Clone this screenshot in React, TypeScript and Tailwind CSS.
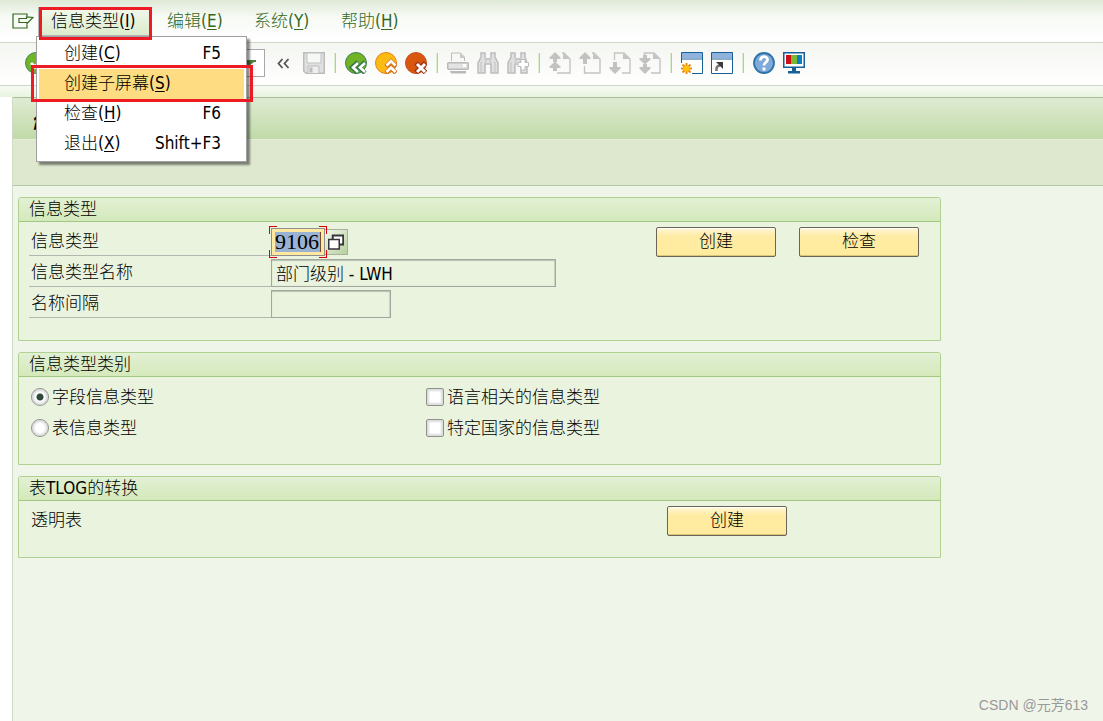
import { useState, type ReactNode } from 'react';
import { clsx } from 'clsx';

const menus = [
  { label: '编辑', hotkey: 'E' },
  { label: '系统', hotkey: 'Y' },
  { label: '帮助', hotkey: 'H' },
];

const menuItems = [
  { label: '创建', hotkey: 'C', shortcut: 'F5' },
  { label: '创建子屏幕', hotkey: 'S', shortcut: '' },
  { label: '检查', hotkey: 'H', shortcut: 'F6' },
  { label: '退出', hotkey: 'X', shortcut: 'Shift+F3' },
];

function Hotkey({ label, hotkey }: { label: string; hotkey: string }) {
  return (
    <span>
      {label}(<u className="underline-offset-2">{hotkey}</u>)
    </span>
  );
}

function ToolButton({ title, children }: { title: string; children: ReactNode }) {
  return (
    <button type="button" title={title} aria-label={title} className="size-[22px] shrink-0">
      <svg viewBox="0 0 22 22" className="size-[22px]" fill="none">
        {children}
      </svg>
    </button>
  );
}

function Separator() {
  return (
    <span className="flex h-5 w-1 shrink-0 justify-center">
      <span className="w-px bg-[#dcefcf]" />
      <span className="w-px bg-[#a9d48a]" />
    </span>
  );
}

function PageShape() {
  return (
    <>
      <path d="M13 1h2l6 6v14H8" stroke="#c4c4c4" strokeWidth="1.4" />
      <path d="M14 1v6h7z" fill="#c4c4c4" />
    </>
  );
}

function Toolbar() {
  return (
    <div className="flex h-[43px] items-center gap-2 overflow-hidden border-b border-[#cdd8c5] bg-linear-to-b from-[#f4f6f1] to-white pb-0.5 pl-[25px]">
      <ToolButton title="回车">
        <circle cx="11" cy="11" r="10.5" fill="#6fb52c" stroke="#3f8a4a" />
        <path d="M6 11l4 4 7-8" stroke="#fff" strokeWidth="3" />
      </ToolButton>
      <div className="flex h-7 w-[210px] shrink-0 items-center border border-[#a8a8a8] bg-white pr-2">
        <input aria-label="命令" className="h-full min-w-0 flex-1 bg-transparent px-1 outline-none" />
        <button type="button" aria-label="命令历史">
          <svg viewBox="0 0 14 6" className="h-1.5 w-3.5">
            <path d="M0 0h14v2h-2l-5 4-5-4H0z" fill="#4f7f3d" />
          </svg>
        </button>
      </div>
      <ToolButton title="折叠">
        <path d="M9.5 7l-4 4.5 4 4.5M15.500 7l-4 4.500 4 4.500" stroke="#555" strokeWidth="1.800" />
      </ToolButton>
      <ToolButton title="保存">
        <path d="M.75.75h20.500v20.500H3L.75 19z" fill="#e0e0e0" stroke="#bcbcbc" strokeWidth="1.500" />
        <path d="M4 1h14v10H4z" fill="#f6f8f4" stroke="#c2c2c2" />
        <path d="M5 14h11v7.500H5z" fill="#eee" stroke="#bcbcbc" />
        <path d="M6.500 15.500h3v5h-3z" fill="#bcbcbc" />
      </ToolButton>
      <Separator />
      <ToolButton title="返回">
        <circle cx="11" cy="11" r="10.500" fill="#72b326" stroke="#3b8050" />
        <path d="M13 10l-6 5.500 6 5.500M20 10l-6 5.500 6 5.500" stroke="#3b7a4a" strokeWidth="4.500" />
        <path d="M13 11l-5 4.500 5 4.500M20 11l-5 4.500 5 4.500" stroke="#fff" strokeWidth="2.500" />
      </ToolButton>
      <ToolButton title="退出">
        <circle cx="11" cy="11" r="10.500" fill="#fcbb12" stroke="#e68217" />
        <path d="M11 14.500l5-5 5 5M11 21l5-5 5 5" stroke="#d9741a" strokeWidth="4.500" />
        <path d="M11.500 13.500L16 9l4.500 4.500M11.500 20l4.500-4.500 4.500 4.500" stroke="#fff" strokeWidth="2.600" />
      </ToolButton>
      <ToolButton title="取消">
        <circle cx="11" cy="11" r="10.500" fill="#d9560f" stroke="#c4501c" />
        <path d="M11 11l9.500 9.500M20.500 11L11 20.500" stroke="#9c3416" strokeWidth="5" />
        <path d="M12 12l8 8M20 12l-8 8" stroke="#fff" strokeWidth="3" />
      </ToolButton>
      <Separator />
      <ToolButton title="打印">
        <path d="M4.500 9V1h9l4 4v4" stroke="#bcbcbc" />
        <path d="M13 1v5h5z" fill="#c6c6c6" />
        <rect x=".75" y="10.750" width="20.500" height="6.500" rx="1" fill="#e3e3e3" stroke="#b9b9b9" strokeWidth="1.500" />
        <path d="M16 12h3v3h-3z" fill="#fff" />
        <path d="M3 19h16v2.500H4z" fill="#b9b9b9" />
      </ToolButton>
      <ToolButton title="查找">
        <path d="M4 1h4v4l1 2h4l1-2V1h4v4l3 6v10h-7v-9H8v9H1V11l3-6z" fill="#e0e0e0" stroke="#bcbcbc" strokeWidth="1.500" />
        <path d="M8 4l1 8M14 4l-1 8M4 10v10M18 10v10" stroke="#cbcbcb" strokeWidth="1.500" />
      </ToolButton>
      <ToolButton title="继续查找">
        <path d="M4 1h4v4l1 2h4l1-2V1h4v4l2 6v10h-6v-9H8v9H1V11l3-6z" fill="#e0e0e0" stroke="#bcbcbc" strokeWidth="1.500" />
        <path d="M8 4l1 8M14 4l-1 8M4 10v10" stroke="#cbcbcb" strokeWidth="1.500" />
        <path d="M14 7.500h4v3h3.500v4H18V18h-4v-3.500h-3v-4h3z" fill="#fff" stroke="#bcbcbc" />
      </ToolButton>
      <Separator />
      <ToolButton title="首页">
        <PageShape />
        <path d="M6 0l5.500 5.500V7H8v3H4V7H.5V5.500zM6 9.500l5.500 5V16H8v3H4v-3H.5v-1.500z" fill="#c2c2c2" />
      </ToolButton>
      <ToolButton title="上一页">
        <path d="M5.500 14v7H21V7l-6-6h-2" stroke="#c4c4c4" strokeWidth="1.400" />
        <path d="M14 1v6h7z" fill="#c4c4c4" />
        <path d="M6 0l5.500 5.500V7H8v5H4V7H.5V5.500z" fill="#c2c2c2" />
      </ToolButton>
      <ToolButton title="下一页">
        <path d="M5.500 8V1H15l6 6v14h-8" stroke="#c4c4c4" strokeWidth="1.400" />
        <path d="M14 1v6h7z" fill="#c4c4c4" />
        <path d="M6 22l5.500-5.500V15H8v-5H4v5H.5v1.500z" fill="#c2c2c2" />
      </ToolButton>
      <ToolButton title="末页">
        <path d="M5.500 3V1H15l6 6v14h-9" stroke="#c4c4c4" strokeWidth="1.400" />
        <path d="M14 1v6h7z" fill="#c4c4c4" />
        <path d="M6 12.500L.5 7.500V6H4V3h4v3h3.500v1.500zM6 22L.5 16.500V15H4v-3h4v3h3.500v1.500z" fill="#c2c2c2" />
      </ToolButton>
      <Separator />
      <ToolButton title="新建会话">
        <path d="M.5.500h21v21H.5z" fill="#fff" stroke="#175f96" />
        <path d="M1 1h20v5H1z" fill="#8fb3dc" />
        <path d="M1 7h20" stroke="#175f96" />
        <path d="M0 11h11v11H0z" fill="#fff" />
        <path d="M5.500 11v11M0 16.500h11M1.500 12.500l8 8M9.500 12.500l-8 8" stroke="#ee8b0d" strokeWidth="2" />
        <circle cx="5.500" cy="16.500" r="3" fill="#ffc20e" />
      </ToolButton>
      <ToolButton title="生成快捷方式">
        <path d="M.5.500h21v21H.5z" fill="#fff" stroke="#175f96" />
        <path d="M1 1h20v5H1z" fill="#8fb3dc" />
        <path d="M1 7h20" stroke="#175f96" />
        <path d="M5.500 19v-2c0-2 1-3.500 4-3.500" stroke="#777" strokeWidth="2.500" />
        <path d="M5 10h7v7l-2.500-2.500z" fill="#3c3c3c" />
      </ToolButton>
      <Separator />
      <ToolButton title="帮助">
        <circle cx="11" cy="11" r="10" fill="#7ea9d8" stroke="#2b73a8" strokeWidth="1.800" />
        <path d="M7.500 8.500c0-5 7-5 7-1 0 3-3.500 2.500-3.500 6" stroke="#fff" strokeWidth="2.800" />
        <path d="M9.500 15.500h3v3h-3z" fill="#fff" />
      </ToolButton>
      <ToolButton title="定制本地布局">
        <path d="M.75.750h20.500v14.500H.75z" fill="#fff" stroke="#175f96" strokeWidth="1.500" />
        <path d="M3 3h5v9H3z" fill="#cc1016" />
        <path d="M8 3h6v9H8z" fill="#7cb82f" />
        <path d="M14 3h5v9h-5z" fill="#0a7fc4" />
        <path d="M9 16h4v3h4v2.500H5V19h4z" fill="#175f96" />
      </ToolButton>
    </div>
  );
}

function MenuBar() {
  return (
    <nav className="flex h-[43px] items-center border-b border-[#cdd8c5] bg-linear-to-b from-[#dfe9d6] via-[#f7faf5] via-40% to-white pl-3 text-[#33691e]">
      <button type="button" aria-label="系统菜单" className="w-[26px] shrink-0">
        <svg viewBox="0 0 22 16" className="h-4 w-[22px]" fill="none" stroke="#33691e" strokeWidth="1.200">
          <path d="M15 3.500V1H1v14h14v-3.500" />
          <path d="M7 5.500h7.500V4L21 4.500l-6 6V9.500H7z" />
        </svg>
      </button>
      <div className="flex items-center gap-[3px]">
        <div className="relative">
          <button
            type="button"
            aria-expanded="true"
            className="h-[29px] w-[114px] border border-[#b5b5b5] bg-linear-to-b from-[#f2f8ec] to-[#dcebcc] pl-3 text-left text-black"
          >
            <Hotkey label="信息类型" hotkey="I" />
          </button>
          <div className="pointer-events-none absolute top-0 left-px z-30 h-[33px] w-[113px] border-3 border-[#ed1c24]" />
          <ul className="absolute top-[29px] -left-0.5 z-20 w-[211px] border border-[#a0a0a0] bg-white p-0.5 text-black shadow-[3px_3px_2px_rgba(0,0,0,0.45)]">
            {menuItems.map((item) => (
              <li key={item.label} className="relative">
                <button
                  type="button"
                  className={clsx(
                    'flex h-[30px] w-full items-center justify-between pr-[23px] pb-0.5 pl-[25px]',
                    item.hotkey === 'S' && 'bg-[#fddc82]',
                  )}
                >
                  <Hotkey label={item.label} hotkey={item.hotkey} />
                  <span>{item.shortcut}</span>
                </button>
                {item.hotkey === 'S' && (
                  <div className="pointer-events-none absolute -top-1 -right-[9px] -bottom-[3px] -left-2 border-3 border-[#ed1c24]" />
                )}
              </li>
            ))}
          </ul>
        </div>
        {menus.map((menu) => (
          <button key={menu.label} type="button" className="h-[29px] w-[84px] pl-3 text-left">
            <Hotkey {...menu} />
          </button>
        ))}
      </div>
    </nav>
  );
}

function Group({ title, children }: { title: string; children: ReactNode }) {
  return (
    <section className="w-full max-w-[923px] rounded-t-[3px] border border-[#b0d190] bg-[#eaf3de]">
      <h2 className="h-6 rounded-t-[2px] border-b border-[#a2c783] bg-linear-to-b from-[#e2f0d4] to-[#d4e9bb] pl-2.5 leading-[22px]">
        {title}
      </h2>
      <div className="pt-1.5 pr-5 pb-[22px] pl-2.5">{children}</div>
    </section>
  );
}

function PushButton({ children }: { children: ReactNode }) {
  return (
    <button
      type="button"
      className="-my-px h-[30px] w-[120px] shrink-0 rounded-[2px] border border-[#6b6558] bg-linear-to-b from-[#fff6d6] via-[#ffeca4] via-30% to-[#ffeb9c] pb-0.5 shadow-[inset_0_1px_0_#fff,inset_0_-1px_0_#d9c57c]"
    >
      {children}
    </button>
  );
}

function FieldRow({ id, label, children }: { id: string; label: string; children: ReactNode }) {
  return (
    <div className="flex h-7">
      <label htmlFor={id} className="w-[242px] shrink-0 border-b border-[#b3b8ae] pl-0.5 leading-[26px]">
        {label}
      </label>
      {children}
    </div>
  );
}

const readOnlyField =
  'h-7 border border-[#a3a69f] bg-[#eaf3de] px-1 pb-0.5 shadow-[inset_0_1px_1px_#b9c0b0,inset_-1px_0_1px_#cdd3c5] outline-none';

const choiceBox =
  'size-[18px] shrink-0 appearance-none border border-[#8f938c] bg-white shadow-[inset_0_0_2px_2px_#dcdcdc]';

const radioDot = 'rounded-full checked:bg-[radial-gradient(circle,#2f4a38_0_3px,#fff_4px)]';

export default function App() {
  const [category, setCategory] = useState('field');

  return (
    <div className="relative flex min-h-screen flex-col bg-white font-['DejaVu_Sans_Condensed','Noto_Sans_CJK_SC',sans-serif] text-[17px] leading-6 font-light text-black">
      <MenuBar />
      <Toolbar />
      <div className="h-[11px] bg-linear-to-b from-[#f5faf2] to-[#e8f4e0]" />
      <main className="ml-3 flex flex-1 flex-col border-l border-[#cfdcc5] bg-[#f0f5ea]">
        <h1 className="h-[43px] border-t border-b border-t-[#a9bd98] border-b-[#e4eed9] bg-linear-to-b from-[#dfebd2] to-[#c0daa8] pl-[18px] text-[20px] leading-[46px] font-bold italic">
          信息类型
        </h1>
        <div className="h-[46px] border-b border-[#b5c5a6] bg-[#dde8cf]" />
        <div className="flex flex-col gap-[11px] px-[5px] pt-[11px] pb-8">
          <Group title="信息类型">
            <div className="flex items-start gap-[23px]">
              <div className="mr-[77px] flex w-[527px] flex-col gap-[3px]">
                <FieldRow id="infotype" label="信息类型">
                  <div className="relative flex h-7 w-[54px] border border-[#8f8f8f] bg-[#ffe9a0] p-[3px]">
                    <input
                      id="infotype"
                      defaultValue="9106"
                      className="w-full min-w-0 border-r border-[#7a4a2a] bg-[#9bb3d3] font-['Liberation_Serif',serif] text-[22px] font-normal outline-none"
                    />
                    <span className="absolute -top-[3px] -left-[3px] size-2 border-t border-l border-[#e00000]" />
                    <span className="absolute -top-[3px] -right-[3px] size-2 border-t border-r border-[#e00000]" />
                    <span className="absolute -bottom-[3px] -left-[3px] size-2 border-b border-l border-[#e00000]" />
                    <span className="absolute -right-[3px] -bottom-[3px] size-2 border-r border-b border-[#e00000]" />
                  </div>
                  <button
                    type="button"
                    aria-label="搜索帮助"
                    className="mt-px h-[26px] w-[23px] border border-l-0 border-[#a5b39a] bg-linear-to-br from-[#f3f7ee] to-[#b6d09c] pl-[3px]"
                  >
                    <svg viewBox="0 0 16 16" className="size-4" fill="#fff" stroke="#38343c" strokeWidth="1.500">
                      <path d="M4.750 1.500h10.500v9H4.750z" strokeWidth="2" />
                      <path d="M.75 5.500h10.500v9.500H.75z" />
                    </svg>
                  </button>
                </FieldRow>
                <FieldRow id="infotype-name" label="信息类型名称">
                  <input id="infotype-name" readOnly value="部门级别 - LWH" className={clsx(readOnlyField, 'w-[285px]')} />
                </FieldRow>
                <FieldRow id="name-range" label="名称间隔">
                  <input id="name-range" readOnly value="" className={clsx(readOnlyField, 'w-[120px]')} />
                </FieldRow>
              </div>
              <PushButton>创建</PushButton>
              <PushButton>检查</PushButton>
            </div>
          </Group>

          <Group title="信息类型类别">
            <div className="grid grid-cols-[395px_1fr] gap-y-[3px] pl-0.5">
              <label className="flex h-7 items-center gap-[3px]">
                <input
                  type="radio"
                  name="category"
                  checked={category === 'field'}
                  onChange={() => setCategory('field')}
                  className={clsx(choiceBox, radioDot)}
                />
                字段信息类型
              </label>
              <label className="flex h-7 items-center gap-[3px]">
                <input type="checkbox" className={clsx(choiceBox, 'rounded-[2px] checked:bg-[#2f4a38]')} />
                语言相关的信息类型
              </label>
              <label className="flex h-7 items-center gap-[3px]">
                <input
                  type="radio"
                  name="category"
                  checked={category === 'table'}
                  onChange={() => setCategory('table')}
                  className={clsx(choiceBox, radioDot)}
                />
                表信息类型
              </label>
              <label className="flex h-7 items-center gap-[3px]">
                <input type="checkbox" className={clsx(choiceBox, 'rounded-[2px] checked:bg-[#2f4a38]')} />
                特定国家的信息类型
              </label>
            </div>
          </Group>

          <Group title="表TLOG的转换">
            <div className="flex h-7 pl-0.5">
              <span className="w-[636px] leading-[26px]">透明表</span>
              <PushButton>创建</PushButton>
            </div>
          </Group>
        </div>
      </main>
      <span className="absolute right-[15px] bottom-1 font-['Liberation_Sans','Noto_Sans_CJK_SC',sans-serif] text-[14px] font-normal text-[#999]">
        CSDN @元芳613
      </span>
    </div>
  );
}
